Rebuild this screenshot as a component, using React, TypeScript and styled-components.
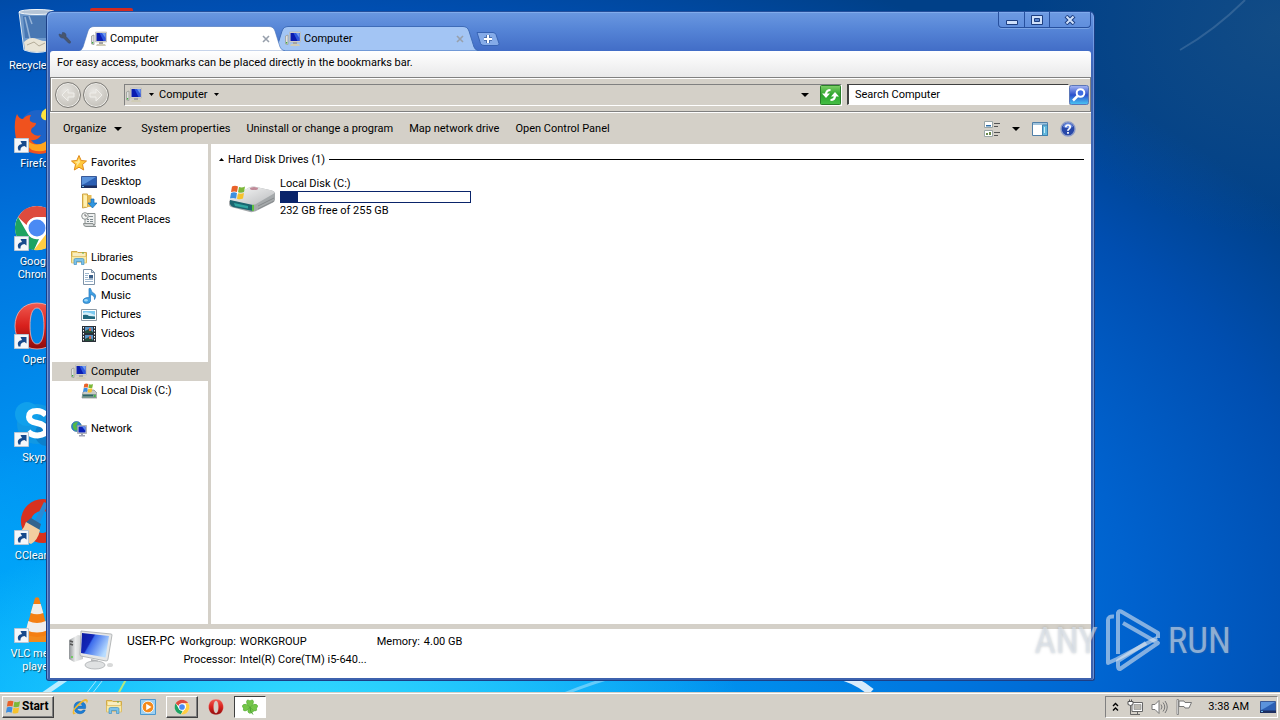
import React from 'react';
import styled, { createGlobalStyle, css } from 'styled-components';

const GlobalStyle = createGlobalStyle`
  *, *::before, *::after { box-sizing: border-box; }
  body { margin: 0; font-family: Roboto, "Liberation Sans", sans-serif; font-size: 11px; line-height: 13px; color: #000; }
  button, input { font: inherit; color: inherit; }
  button { padding: 0; border: 0; background: none; cursor: pointer; white-space: nowrap; }
  a { color: inherit; text-decoration: none; }
  ul, dl, dd, h1, h2 { margin: 0; padding: 0; list-style: none; font: inherit; }
  svg { display: block; flex: none; }
`;

const face = '#d4d0c8';
const sunken = css`border: 1px solid; border-color: #808080 #fff #fff #808080;`;
const raised = css`border: 1px solid; border-color: #fff #404040 #404040 #fff; box-shadow: inset -1px -1px #808080;`;

/* ---------- desktop ---------- */

const Screen = styled.div`
  display: flex;
  flex-direction: column;
  height: 100vh;
  overflow: hidden;
`;

const Desktop = styled.main`
  position: relative;
  flex: 1;
  min-height: 0;
  display: flex;
  overflow: hidden;
  background:
    radial-gradient(ellipse 34% 30% at 24% 104%, rgba(60, 225, 255, 0.9), transparent),
    radial-gradient(ellipse 20% 30% at 100% 4%, rgba(40, 90, 130, 0.45), transparent),
    linear-gradient(15deg, rgba(0, 180, 255, 0.75) 0%, transparent 24%),
    radial-gradient(ellipse 98% 104% at 20% 90%, #00a8fa 0%, #0094f2 28%, #0078e0 54%, #0062ce 70%, #004eb0 86%, #004088 100%);
`;

const Wallpaper = styled.svg`
  position: absolute;
  inset: 0;
  width: 100%;
  height: 100%;
`;

const IconColumn = styled.ul`
  position: relative;
  width: 74px;
  padding-top: 8px;
`;

const ShortcutItem = styled.li`
  height: 98px;
`;

const ShortcutLink = styled.a`
  position: relative;
  display: flex;
  flex-direction: column;
  align-items: center;
  gap: 3px;
  color: #fff;
  text-align: center;
  text-shadow: 1px 1px 1px rgba(0, 0, 0, 0.6);
`;

const ShortcutLabel = styled.span`
  width: 64px;
`;

const ArrowBadge = styled.svg`
  position: absolute;
  left: 14px;
  top: 32px;
`;

/* ---------- window ---------- */

const Window = styled.section`
  position: absolute;
  inset: 11px 185px 11px 46px;
  display: flex;
  flex-direction: column;
  padding: 0 3px 2px;
  border: 1px solid #1c3f86;
  border-top-color: #244f9c;
  border-radius: 6px 6px 3px 3px;
  background: linear-gradient(#6a98e0 0, #5584d6 18px, #416cc6 40px, #3f66b4 60px, #3d62ae 100%);
  box-shadow: inset 1px 1px rgba(150, 190, 245, 0.55), inset -1px 0 rgba(150, 190, 245, 0.5);
`;

const TitleBar = styled.header`
  display: flex;
  align-items: flex-end;
  height: 39px;
  padding-left: 7px;
`;

const WrenchButton = styled.button`
  align-self: center;
  width: 16px;
  margin: 12px 6px 0 0;
`;

const TabList = styled.div`
  display: flex;
  align-items: flex-end;
`;

const TabFrame = styled.div<{ $active?: boolean }>`
  position: relative;
  z-index: ${p => (p.$active ? 1 : 0)};
  width: 206px;
  height: 25px;
  margin-right: -12px;
`;

const TabShape = styled.svg`
  position: absolute;
  inset: 0;
`;

const TabContent = styled.div`
  position: relative;
  display: flex;
  align-items: center;
  height: 25px;
  padding: 0 15px 0 12px;
`;

const TabButton = styled.button`
  display: flex;
  align-items: center;
  gap: 3px;
  flex: 1;
`;

const NewTabButton = styled.button`
  margin: 0 0 5px 9px;
`;

const WindowControls = styled.div`
  display: flex;
  align-self: flex-start;
  margin-left: auto;
  height: 16px;
  border: 1px solid #27509e;
  border-top: 0;
  border-radius: 0 0 4px 4px;
  background: rgba(120, 165, 235, 0.25);
  box-shadow: 0 1px rgba(160, 195, 245, 0.5);
`;

const ControlButton = styled.button<{ $wide?: boolean }>`
  display: flex;
  align-items: center;
  justify-content: center;
  width: ${p => (p.$wide ? 41 : 25)}px;
  & + & { border-left: 1px solid #27509e; }
`;

const BookmarksBar = styled.p`
  position: relative;
  margin: 0;
  height: 26px;
  padding: 5px 7px;
  border-radius: 3px 3px 0 0;
  background: linear-gradient(#fff, #e9e9ea);
`;

const AddressRow = styled.div`
  display: flex;
  align-items: center;
  height: 35px;
  padding: 0 1px 0 4px;
  border: 1px solid #808080;
  box-shadow: inset 1px 1px #fff, 0 1px #fff;
  background: ${face};
`;

const NavButtons = styled.div`
  display: flex;
  gap: 2px;
  margin-right: 15px;
`;

const NavButton = styled.button`
  display: flex;
  align-items: center;
  justify-content: center;
  width: 26px;
  height: 26px;
  border: 1px solid #7c7a76;
  border-radius: 50%;
  background: radial-gradient(circle at 40% 35%, #e8e6e2, #c4c1ba 75%);
  box-shadow: inset 0 0 0 1px #efeeea;
`;

const AddressField = styled.div`
  ${sunken}
  flex: 1;
  display: flex;
  align-items: center;
  height: 22px;
`;

const Crumb = styled.button`
  display: flex;
  align-items: center;
  gap: 7px;
  padding-left: 1px;
  & + & { padding-left: 5px; }
`;

const FieldEnd = styled.div`
  display: flex;
  align-items: center;
  gap: 11px;
  margin-left: auto;
`;

const SearchForm = styled.form`
  display: flex;
  align-items: center;
  margin-left: 5px;
`;

const SearchInput = styled.input`
  width: 222px;
  height: 21px;
  padding: 0 6px;
  border: 1px solid;
  border-color: #404040 #fff #fff #404040;
  border-left-width: 2px;
  border-radius: 0;
  background: #fff;
  outline: 0;
  &::placeholder { color: #000; opacity: 1; }
`;

const Toolbar = styled.div`
  display: flex;
  align-items: center;
  gap: 16px;
  height: 31px;
  padding: 0 15px 0 13px;
  margin-top: 1px;
  background: ${face};
`;

const ToolButton = styled.button`
  display: flex;
  align-items: center;
  gap: 8px;
  &:first-child { margin-right: 3px; }
`;

const ToolIcons = styled.div`
  display: flex;
  align-items: center;
  gap: 12px;
  margin-left: auto;
`;

const Body = styled.div`
  flex: 1;
  display: flex;
  min-height: 0;
  background: #fff;
`;

const Sidebar = styled.nav`
  display: flex;
  flex-direction: column;
  gap: 19px;
  width: 161px;
  padding: 9px 0 0 2px;
  border-right: 3px solid ${face};
`;

const TreeItem = styled.a<{ $child?: boolean; $selected?: boolean }>`
  display: flex;
  align-items: center;
  gap: 4px;
  height: 19px;
  padding-left: ${p => (p.$child ? 29 : 19)}px;
  background: ${p => (p.$selected ? face : 'transparent')};
`;

const FileArea = styled.section`
  flex: 1;
  padding: 9px 7px 0 8px;
`;

const GroupHeader = styled.h2`
  display: flex;
  align-items: center;
  gap: 4px;
  &::after { content: ''; flex: 1; height: 1px; background: #000; }
`;

const DriveItem = styled.a`
  display: grid;
  grid-template-columns: 48px 191px;
  column-gap: 4px;
  align-items: center;
  width: max-content;
  margin: 11px 0 0 9px;
`;

const DriveText = styled.div`
  display: flex;
  flex-direction: column;
  gap: 1px;
`;

const CapacityBar = styled.div`
  height: 12px;
  border: 1px solid #0a246a;
`;

const CapacityFill = styled.div`
  height: 100%;
  background: #0a246a;
`;

const DetailsPane = styled.footer`
  display: flex;
  height: 54px;
  border-top: 5px solid ${face};
  padding: 0 19px;
  background: #fff;
`;

const ComputerName = styled.h1`
  margin: 5px 2px 0 14px;
  font-size: 12px;
  line-height: 14px;
`;

const Details = styled.dl`
  display: grid;
  grid-template-columns: 59px 130px 46px auto;
  grid-auto-rows: 18px;
  column-gap: 4px;
  align-items: center;
  align-content: start;
  padding-top: 3px;
  dt { text-align: right; white-space: nowrap; }
  dt:nth-of-type(3) { grid-column: 1; }
  dd { white-space: nowrap; }
`;

/* ---------- watermark ---------- */

const Watermark = styled.div`
  position: absolute;
  right: 49px;
  bottom: 18px;
  display: flex;
  align-items: center;
  gap: 7px;
  font-family: "Roboto Condensed", Roboto, sans-serif;
  font-size: 37px;
  line-height: 66px;
  color: rgba(225, 232, 240, 0.58);
  text-shadow: 0 0 3px rgba(110, 120, 130, 0.4);
`;

/* ---------- taskbar ---------- */

const Taskbar = styled.footer`
  display: flex;
  align-items: center;
  height: 28px;
  padding: 0 2px;
  border-top: 1px solid ${face};
  box-shadow: inset 0 1px #fff;
  background: ${face};
`;

const StartButton = styled.button`
  ${raised}
  display: flex;
  align-items: center;
  gap: 1px;
  width: 52px;
  height: 22px;
  padding-left: 2px;
  margin-right: 10px;
  font-size: 12px;
  font-weight: 700;
`;

const TaskButton = styled.button<{ $state?: 'open' | 'active' }>`
  display: flex;
  align-items: center;
  justify-content: center;
  width: 32px;
  height: 22px;
  margin-right: 2px;
  ${p => p.$state === 'open' && raised}
  ${p => p.$state === 'active' && css`
    background: #fff;
    border: 1px solid;
    border-color: #404040 #fff #fff #404040;
  `}
`;

const Tray = styled.div`
  ${sunken}
  display: flex;
  align-items: center;
  gap: 8px;
  height: 22px;
  margin-left: auto;
  padding: 0 1px 0 6px;
`;

const Clock = styled.time`
  margin: 0 3px 0 8px;
`;

/* ---------- icons ---------- */

const Caret = ({ size = 5 }: { size?: number }) => (
  <svg width={size} height={size > 5 ? 4 : 3} viewBox="0 0 10 6" preserveAspectRatio="none" aria-hidden><path d="M0 0h10L5 6z" /></svg>
);

const ComputerIcon = () => (
  <svg width="16" height="16" viewBox="0 0 16 16" aria-hidden>
    <path d="M.5 5l2.500-1v9.500l-2.500-.5z" fill="#dfe1df" stroke="#9a9d98" strokeWidth=".8" />
    <path d="M1 11h1.200v1.500H1z" fill="#3fae3f" />
    <path d="M4.500 1h11v10h-11z" fill="#dad9d2" stroke="#b3b3ae" strokeWidth=".6" />
    <path d="M5.500 2h9v8h-9z" fill="#0a1cb0" />
    <path d="M8.500 2l4 8h2V2z" fill="#2d55dc" />
    <path d="M11 2h3.500v5z" fill="#6f9cf0" />
    <path d="M8 11h4v2H8z" fill="#a4a4a6" />
    <path d="M6 13h8l1 2H5z" fill="#d0ccb6" />
  </svg>
);

const StarIcon = () => (
  <svg width="16" height="16" viewBox="0 0 16 16" aria-hidden>
    <path d="M8 .5l2.200 5 5.300.5-4 3.500 1.200 5.500L8 12.200 3.300 15l1.200-5.500L.5 6l5.300-.5z" fill="#ffc83c" stroke="#e08a1c" />
    <path d="M8 3.500L9.200 7l-4 4.800.8-3.300-2.500-1.700 3-.2z" fill="#ffe795" />
  </svg>
);

const DesktopIcon = () => (
  <svg width="16" height="16" viewBox="0 0 16 16" aria-hidden>
    <path d="M.5 2.500h15v10H.5z" fill="#2b5fb4" stroke="#3a5a98" />
    <path d="M1 3h14L5 9l-4 2z" fill="#5b93dc" />
    <path d="M0 11.500h16V14H0z" fill="#1d2f60" />
    <path d="M1 12h2v1H1z" fill="#6fc0f0" />
  </svg>
);

const DownloadsIcon = () => (
  <svg width="16" height="16" viewBox="0 0 16 16" aria-hidden>
    <path d="M1.500 1h5v13l-5 1z" fill="#f6dc85" stroke="#cfa545" />
    <path d="M6.500 2h4v12h-4z" fill="#e6bb55" />
    <path d="M3 2l3 1v11l-3-1z" fill="#fff0b0" />
    <path d="M10 6h3v4h3l-4.500 5L7 10h3z" fill="#2f96e0" stroke="#1769b0" strokeWidth=".7" />
  </svg>
);

const RecentIcon = () => (
  <svg width="16" height="16" viewBox="0 0 16 16" aria-hidden>
    <path d="M4 1.500h10v11H4z" fill="#eef0f0" stroke="#8b9190" />
    <path d="M2.500 11.500H12q0 3 3 3H5q-2.500 0-2.500-3z" fill="#d5d8d8" stroke="#8b9190" />
    <path d="M8 4.500h4M6 7.500h2M9 7.500h3M6 9.500h2M9 9.500h3" stroke="#7f8b90" />
    <circle cx="4" cy="4" r="3.300" fill="#f6f7f6" stroke="#8b9190" />
    <path d="M4 2v2h2" stroke="#555" fill="none" strokeWidth=".8" />
  </svg>
);

const FolderIcon = () => (
  <svg width="16" height="16" viewBox="0 0 16 16" aria-hidden>
    <path d="M.5 1.500H6l1 1h8.500V12H.5z" fill="#f2da82" stroke="#d1a94a" />
    <path d="M2 4h12M2 6h12" stroke="#fff" />
    <path d="M11 3h2" stroke="#5fae4a" />
    <path d="M.5 6.500h15V13h-3v-3h-9v3h-3z" fill="#f9e9a6" stroke="#d9b75c" strokeWidth=".7" />
    <path d="M3 14.500V10q0-1.500 1.500-1.500h7Q13 8.500 13 10v4.500h-2.500v-3h-5v3z" fill="#7cc2ea" stroke="#4392c4" strokeWidth=".7" />
  </svg>
);

const DocumentIcon = () => (
  <svg width="16" height="16" viewBox="0 0 16 16" aria-hidden>
    <path d="M2.500.5h8l3 3v12h-11z" fill="#fff" stroke="#7e93a8" />
    <path d="M10.500.5v3h3z" fill="#cfdbe6" stroke="#7e93a8" />
    <path d="M4 4.500h4M4 6.500h3M4 8.500h3M4 10.500h8M4 12.500h8" stroke="#9db7cf" />
    <path d="M8 6h4v3.500H8z" fill="#3b5f88" />
  </svg>
);

const MusicIcon = () => (
  <svg width="16" height="16" viewBox="0 0 16 16" aria-hidden>
    <path d="M8 .5h1.500q.5 3.500 3.500 5t.5 6q.5-4-4-5V13q-.5 2.500-4 2.500T2 13t3-3.200 3 .2z" fill="#3f9fe2" stroke="#2477bb" strokeWidth=".7" />
    <ellipse cx="5" cy="12.300" rx="1.800" ry="1.300" fill="#9fd7f8" />
  </svg>
);

const PictureIcon = () => (
  <svg width="16" height="16" viewBox="0 0 16 16" aria-hidden>
    <path d="M.5 2.500h15v11H.5z" fill="#fff" stroke="#8f9ba6" />
    <path d="M2 4h12v8H2z" fill="#7cc9f0" />
    <path d="M2 6q4-2 12 2v2H2z" fill="#d3eefa" />
    <path d="M2 8q4-1 6 1l6 .5V12H2z" fill="#20687e" />
  </svg>
);

const VideoIcon = () => (
  <svg width="16" height="16" viewBox="0 0 16 16" aria-hidden>
    <path d="M1 0h14v16H1z" fill="#2a3038" />
    <path d="M4 1h8v6H4zM4 9h8v6H4z" fill="#5b95c8" />
    <path d="M4 5l4-2 4 3v1H4zM4 13l4-2 4 3v1H4z" fill="#264f3c" />
    <path d="M8 2h2v3H8zM8 10h2v3H8z" fill="#d4684a" />
    <path d="M2.500 1v14M13.500 1v14" stroke="#fff" strokeDasharray="1.500 1.500" />
  </svg>
);

const Flag = () => (
  <>
    <path d="M1 1.500q3-1.500 6 0L6 7Q3.500 5.800 0 7z" fill="#e8622a" />
    <path d="M8 2q3 1 6-.5L13 7q-3 1.500-6 .3z" fill="#7cb83a" />
    <path d="M0 8q3-1.500 6 0l-1 5.500q-3-1.200-6 0z" fill="#3c8ee0" />
    <path d="M7 8.300q3 1 6-.3L12 13.500q-3 1.500-6 .3z" fill="#f6c22c" />
  </>
);

const SmallDriveIcon = () => (
  <svg width="16" height="16" viewBox="0 0 16 16" aria-hidden>
    <path d="M2 9l3-2h8l3 3v5H1z" fill="#c8cbc8" stroke="#85898a" strokeWidth=".7" />
    <path d="M1 11h14v4H1z" fill="#7d9a90" />
    <path d="M2 12.500h10" stroke="#2f6468" strokeWidth="1.500" />
    <path d="M13 12h1.500v2H13z" fill="#3fbf3f" />
    <svg x="2" y="0" width="10" height="10" viewBox="-1 0 15 15"><Flag /></svg>
  </svg>
);

const NetworkIcon = () => (
  <svg width="16" height="16" viewBox="0 0 16 16" aria-hidden>
    <circle cx="5.500" cy="5.500" r="5" fill="#2f86cc" stroke="#1b5d98" strokeWidth=".6" />
    <path d="M2 3q2-2.500 5-2L5 5l2 2-2 3Q1 8 2 3z" fill="#54b848" />
    <path d="M6.500 4.500h9v8h-9z" fill="#d8d9d6" stroke="#8e9296" strokeWidth=".6" />
    <path d="M7.500 5.500h7v6h-7z" fill="#0c22b8" />
    <path d="M11 5.500h3.500V10z" fill="#5d8cf0" />
    <path d="M10 12.500h2V14h2v1.500H8V14h2z" fill="#9fa2b4" />
  </svg>
);

const DriveIcon = () => (
  <svg width="48" height="32" viewBox="0 0 48 32" aria-hidden>
    <defs>
      <linearGradient id="driveTop" x1="0" y1="0" x2="1" y2="1"><stop offset="0" stopColor="#fbfbfb" /><stop offset="1" stopColor="#b9bbbd" /></linearGradient>
    </defs>
    <path d="M1 20L20 7q3-2 6-1.500l18 4q3 1 3 3v6q0 2-2 3L28 30q-3 1.500-6 1L3 26q-2-1-2-3z" fill="#a5a9ab" />
    <path d="M1 19L20 7q3-2 6-1.500l18 4q3 1 2 3L28 23q-3 1.500-6 1z" fill="url(#driveTop)" />
    <path d="M2 19l23 5v6L5 26q-2-1-3-3z" fill="#1b6570" />
    <path d="M6 22l14 3v2.500L7 25z" fill="#2fa5a0" />
    <path d="M24 24l2-.3v6l-2 .3z" fill="#5fc23f" />
    <path d="M30 25l16-8M30 28l16-8" stroke="#7d8284" strokeWidth=".8" />
    <ellipse cx="26" cy="7.500" rx="4" ry="1.500" fill="#c08a98" />
    <svg x="2" y="4" width="15" height="15" viewBox="-1 0 15 15"><Flag /></svg>
  </svg>
);

const BigComputerIcon = () => (
  <svg width="44" height="44" viewBox="0 0 44 44" aria-hidden>
    <defs>
      <linearGradient id="screenBlue" x1="0" y1="0" x2="1" y2=".5"><stop offset="0" stopColor="#0a1aa0" /><stop offset=".4" stopColor="#1226b8" /><stop offset=".45" stopColor="#3c6cec" /><stop offset="1" stopColor="#b8dcff" /></linearGradient>
      <linearGradient id="tower" x1="0" x2="1"><stop offset="0" stopColor="#8f9396" /><stop offset=".45" stopColor="#eceded" /><stop offset="1" stopColor="#c7c9ca" /></linearGradient>
    </defs>
    <path d="M0 11l9-5 5 1v23l-9 3-5-3z" fill="url(#tower)" />
    <path d="M1 12l3 1M1 15l3 1" stroke="#555" strokeWidth="1.500" />
    <circle cx="3" cy="28" r="1" fill="#5cd048" />
    <path d="M12 2l30 3q1 0 1 1l-4 24q0 2-2 2l-25-5q-1 0-1-2z" fill="#e6e7e7" stroke="#a6a9ab" strokeWidth=".8" />
    <path d="M13 4l27 3-3.500 21.500L12 24z" fill="url(#screenBlue)" />
    <path d="M22 30l7 1.500 1 4-8-1z" fill="#b5b7b9" />
    <ellipse cx="26" cy="36" rx="10" ry="4" fill="#dfe1e2" stroke="#aaadb0" strokeWidth=".8" />
    <ellipse cx="41" cy="36" rx="3" ry="2" fill="#d8d9d9" />
  </svg>
);

const WrenchIcon = () => (
  <svg width="16" height="16" viewBox="0 0 16 16" aria-hidden>
    <path d="M2 4l3 1 .5-2.500Q9.500 2.500 9 6.500l4.500 5q.5 2.500-2 1.500L6.500 8Q2.500 8.500 2 4z" fill="#48566e" stroke="#3c4a66" strokeWidth=".6" />
  </svg>
);

const CloseTabIcon = () => (
  <svg width="8" height="8" viewBox="0 0 8 8" aria-hidden><path d="M1 1l6 6M7 1L1 7" stroke="#98a0ac" strokeWidth="1.600" /></svg>
);

const NavArrow = ({ back }: { back?: boolean }) => (
  <svg width="16" height="16" viewBox="0 0 16 16" aria-hidden>
    <path d={back ? 'M8 2L2 8l6 6v-4h6V6H8z' : 'M8 2l6 6-6 6v-4H2V6h6z'} fill="#dedbd5" stroke="#efeeea" />
  </svg>
);

const RefreshIcon = () => (
  <svg width="21" height="20" viewBox="0 0 21 20" aria-hidden>
    <defs><linearGradient id="refreshBg" x2="0" y2="1"><stop offset="0" stopColor="#7fd068" /><stop offset=".5" stopColor="#2ca32c" /><stop offset="1" stopColor="#46c046" /></linearGradient></defs>
    <rect x=".5" y=".5" width="20" height="19" rx="1" fill="url(#refreshBg)" stroke="#2a7e2a" />
    <path d="M10.500 5Q6 5 6 9.500M10.500 15Q15 15 15 10.500" fill="none" stroke="#fff" strokeWidth="2.200" />
    <path d="M2 8.500h8L6 13zM11 11.500h8L15 7z" fill="#fff" />
  </svg>
);

const SearchIcon = () => (
  <svg width="20" height="20" viewBox="0 0 20 20" aria-hidden>
    <defs><linearGradient id="searchBg" x2="0" y2="1"><stop offset="0" stopColor="#a9b8f4" /><stop offset=".5" stopColor="#2a50cc" /><stop offset="1" stopColor="#4cc8f4" /></linearGradient></defs>
    <rect x=".5" y=".5" width="19" height="19" rx="2" fill="url(#searchBg)" stroke="#5a76b8" />
    <circle cx="11.500" cy="8" r="3.800" fill="#3e6ce0" stroke="#fff" strokeWidth="2" />
    <path d="M8.500 11L4 15.500" stroke="#fff" strokeWidth="2.500" />
  </svg>
);

const ViewIcon = () => (
  <svg width="16" height="16" viewBox="0 0 16 16" aria-hidden>
    <path d="M.5.500h8v6h-8zM.5 9.500h8v6h-8z" fill="#fff" stroke="#9aa6a6" />
    <path d="M2 4h5v1.500H2z" fill="#2f6fa8" />
    <path d="M2 12h2v2H2zM5 11h2v3H5z" fill="#6b8a4c" />
    <path d="M10 2.500h6M10 5.500h4M10 11.500h6M10 14.500h4" stroke="#555" />
  </svg>
);

const PaneIcon = () => (
  <svg width="16" height="14" viewBox="0 0 16 14" aria-hidden>
    <path d="M.5.500h15v13H.5z" fill="#fff" stroke="#4f7fa8" />
    <path d="M1 2h14" stroke="#9fc3dd" strokeWidth="2" />
    <path d="M10.500 3v10.500h5V3z" fill="#62b8dc" stroke="#3c7fae" />
    <path d="M12 5h1v6h-1z" fill="#c9ecf8" />
  </svg>
);

const HelpIcon = () => (
  <svg width="16" height="16" viewBox="0 0 16 16" aria-hidden>
    <circle cx="8" cy="8" r="7" fill="#2747a8" stroke="#8d9cc8" strokeWidth="1.400" />
    <path d="M3 6q1-4 5-4t5 4q-5 2-10 0z" fill="#6f8fe0" />
    <path d="M5.800 6.200Q5.800 4 8 4t2.200 2q0 1.300-1.200 1.900T8 9.800" fill="none" stroke="#fff" strokeWidth="1.700" />
    <path d="M7.100 11h1.800v1.700H7.100z" fill="#fff" />
  </svg>
);

const ChromeIcon = ({ size }: { size: number }) => (
  <svg width={size} height={size} viewBox="0 0 48 48" aria-hidden>
    <circle cx="24" cy="24" r="22" fill="#fff" />
    <path d="M24 2a22 22 0 0 1 19 11H24a11 11 0 0 0-10.500 8L5 13A22 22 0 0 1 24 2z" fill="#dd4b3e" />
    <path d="M5 13l9.500 16.500A11 11 0 0 0 26 35l-5 11A22 22 0 0 1 5 13z" fill="#1da362" />
    <path d="M43 13a22 22 0 0 1-22 33l12.500-16.500A11 11 0 0 0 32 13z" fill="#ffcd42" />
    <circle cx="24" cy="24" r="10.500" fill="#fff" />
    <circle cx="24" cy="24" r="8.500" fill="#4a8af4" />
  </svg>
);

const RecycleArt = () => (
  <svg width="48" height="48" viewBox="0 0 48 48" aria-hidden>
    <path d="M6 4h36l-5 38q-13 5-26 0z" fill="#9db8d4" fillOpacity=".7" stroke="#dbe7f2" />
    <path d="M10 8h28l-2 22H12z" fill="#2f60a4" fillOpacity=".6" />
    <path d="M12 9l6 26M16 8l3 8" stroke="#c8dcf0" strokeWidth="1.500" opacity=".6" />
    <path d="M11 34q6-6 13-3t13 2l-1 9q-12 4-24 0z" fill="#e9e4d6" />
    <path d="M14 37l7-3 5 4 6-3" stroke="#b3ab98" fill="none" />
    <ellipse cx="24" cy="4" rx="18" ry="2.500" fill="#b4c4d6" stroke="#f4f8fb" />
  </svg>
);

const FirefoxArt = () => (
  <svg width="48" height="48" viewBox="0 0 48 48" aria-hidden>
    <circle cx="25" cy="22" r="18" fill="#1d63c8" />
    <path d="M28 10q0-6 8-9 10 6 10 16-8-8-11-3-6 1-7-4z" fill="#ffe23c" />
    <path d="M4 8q2 5 6 5 3-4 8-4-2 3-1 6 2 2 6 2 0 3-4 5-2 3 0 5 4 4 9 2-3 6-10 5 4 6 12 4 9-3 9-12 2-4 0-9 8 6 7 13 0 17-20 18Q3 46 2 26 1 15 4 8z" fill="#f0521e" />
    <path d="M14 34q8 8 18 2 8-5 7-14 8 10 0 18t-20 4q-6-4-5-10z" fill="#ffa51e" />
  </svg>
);

const OperaArt = ({ size }: { size: number }) => (
  <svg width={size} height={size} viewBox="0 0 48 48" aria-hidden>
    <defs><linearGradient id={`opera${size}`} x2="0" y2="1"><stop offset="0" stopColor="#f05a50" /><stop offset=".5" stopColor="#d8201c" /><stop offset="1" stopColor="#8c0c0c" /></linearGradient></defs>
    <path fillRule="evenodd" d="M24 1C10 1 2 11 2 24s8 23 22 23 22-10 22-23S38 1 24 1zm0 5c5 0 7 8 7 18s-2 18-7 18-7-8-7-18 2-18 7-18z" fill={`url(#opera${size})`} stroke="#f5b4ae" strokeWidth=".8" />
  </svg>
);

const SkypeArt = () => (
  <svg width="48" height="48" viewBox="0 0 48 48" aria-hidden>
    <circle cx="24" cy="24" r="20" fill="#1098e4" />
    <circle cx="14" cy="14" r="12" fill="#10a0ec" />
    <circle cx="34" cy="34" r="12" fill="#0c80cc" />
    <path d="M33 15q-4-4-9-4-8 0-8 6 0 4.500 8 6t9 6.500-8.500 6q-6 0-9.500-4" fill="none" stroke="#fff" strokeWidth="6" />
  </svg>
);

const CCleanerArt = () => (
  <svg width="48" height="48" viewBox="0 0 48 48" aria-hidden>
    <path d="M46 8A22 22 0 1 0 46 38l-8-8a11 11 0 1 1 0-12z" fill="#d8321e" />
    <path d="M31 4l4 2-9 20-5-2z" fill="#2a8ad4" />
    <path d="M18 20l10 6-2 7-14-8z" fill="#33648e" />
    <path d="M13 24l14 8q-2 10-9 14L1 38q9-4 12-14z" fill="#f3cfa0" />
  </svg>
);

const VlcArt = () => (
  <svg width="48" height="48" viewBox="0 0 48 48" aria-hidden>
    <path d="M8 33h32l6 11q0 2-2 2H4q-2 0-2-2z" fill="#f28a1c" />
    <path d="M22 2q2-1.500 4 0l10 36q-12 6-24 0z" fill="#f47f12" />
    <path d="M20.300 8h7.400l2.600 9q-6.300 2.500-12.600 0zM15.300 25q8.700 4 17.400 0l2.300 9q-11 5-22 0z" fill="#efeeec" />
  </svg>
);

const PdfArt = () => (
  <svg width="48" height="48" viewBox="0 0 48 48" aria-hidden><rect x="3" width="43" height="46" rx="2" fill="#d42a20" /></svg>
);

const StartFlag = () => (
  <svg width="16" height="16" viewBox="-2 -1 17 17" aria-hidden><Flag /></svg>
);

const IeIcon = () => (
  <svg width="18" height="18" viewBox="0 0 18 18" aria-hidden>
    <path d="M14.500 10.500H6q.5 2.700 3.300 2.700 1.800 0 2.700-1.200h2.300Q13 15.800 9 15.800q-6-.5-6-6.300t6-6q6 .5 5.700 5.500zM6 8h5.500Q11 5.800 8.800 5.800T6 8z" fill="#1b7fd6" stroke="#0f5cae" strokeWidth=".5" />
    <path d="M2.500 16.500Q-.5 13 7 6t9.500-4q1 1.200-1 4 .5-2.800-1-2.900T8 7.500 3 13.500t2 1.800z" fill="#f0b82c" />
  </svg>
);

const MediaIcon = () => (
  <svg width="16" height="16" viewBox="0 0 16 16" aria-hidden>
    <path d="M.5.500h15v15H.5z" fill="#9fd0f0" stroke="#4a98d0" />
    <circle cx="8" cy="8" r="5.800" fill="#f48a1c" stroke="#fff" strokeWidth=".8" />
    <path d="M6.200 4.800v6.400L11.500 8z" fill="#fff" />
  </svg>
);

const CloverIcon = () => (
  <svg width="16" height="16" viewBox="0 0 16 16" aria-hidden>
    <g fill="#74c648" stroke="#4aa42e" strokeWidth=".5">
      <path d="M8 8Q4 5 4.500 2.500T8 1.800q3-1.800 3.500.7T8 8z" />
      <path d="M8 8Q4 4 1.500 5.500T1.500 9Q.5 12 3 12t5-4z" />
      <path d="M8 8q4-4 6.500-2.500T14.500 9q1 3-1.500 3T8 8z" />
      <path d="M8 8q-3 3-2 5t3 1 2.500-1.500T8 8z" />
    </g>
    <path d="M8 8q0 5 3 7.500" stroke="#4ba032" fill="none" />
  </svg>
);

const ChevronsIcon = () => (
  <svg width="7" height="10" viewBox="0 0 7 10" aria-hidden><path d="M1 4l2.500-2.500L6 4M1 8.500L3.500 6 6 8.500" fill="none" stroke="#000" strokeWidth="1.400" /></svg>
);

const TrayNetworkIcon = () => (
  <svg width="16" height="16" viewBox="0 0 16 16" aria-hidden>
    <path d="M5 3.500h10.500v9H5z" fill="#fff" stroke="#666" />
    <path d="M7 5.500h7v5H7z" fill="#bbb8b0" stroke="#888" strokeWidth=".6" />
    <path d="M3.500 6v9.500H13M10.500 12.500v3" fill="none" stroke="#666" />
    <path d="M1 2.500h5v3q-2.500 2-5 0zM2.500.500v2M4.500.500v2" fill="#fff" stroke="#555" />
  </svg>
);

const VolumeIcon = () => (
  <svg width="17" height="16" viewBox="0 0 17 16" aria-hidden>
    <path d="M1 5.500h3l4-4v13l-4-4H1z" fill="#fff" stroke="#777" />
    <path d="M10 5.500q2 2.500 0 5M12 3.500q3.500 4.500 0 9M14 2q4.500 6 0 12" fill="none" stroke="#777" />
  </svg>
);

const FlagIcon = () => (
  <svg width="16" height="16" viewBox="0 0 16 16" aria-hidden>
    <path d="M1 .5h1.500v15H1z" fill="#fff" stroke="#777" strokeWidth=".8" />
    <path d="M3 2h5l1 1.500h6.500L13 9H9L8 7.500H3z" fill="#fff" stroke="#777" />
  </svg>
);

const WatermarkLogo = () => (
  <svg width="56" height="64" viewBox="0 0 56 64" aria-hidden>
    <g fill="none" stroke="currentColor" strokeWidth="4" strokeLinejoin="round">
      <path d="M9 7.500Q3 7 3 11v43l9-4L52 29" />
      <path d="M13 45V4q1-3 4-1l36 21v5" />
      <path d="M18 14l35 20-38 26q-2 0-2-3v-5l28-18" />
    </g>
  </svg>
);

/* ---------- data ---------- */

const shortcuts: { name: string; art: React.ReactNode; linked?: boolean }[] = [
  { name: 'Recycle Bin', art: <RecycleArt /> },
  { name: 'Firefox', art: <FirefoxArt />, linked: true },
  { name: 'Google Chrome', art: <ChromeIcon size={48} />, linked: true },
  { name: 'Opera', art: <OperaArt size={48} />, linked: true },
  { name: 'Skype', art: <SkypeArt />, linked: true },
  { name: 'CCleaner', art: <CCleanerArt />, linked: true },
  { name: 'VLC media player', art: <VlcArt />, linked: true },
];

type Node = { name: string; icon: React.ReactNode; selected?: boolean };

const tree: { root: Node; children: Node[] }[] = [
  {
    root: { name: 'Favorites', icon: <StarIcon /> },
    children: [
      { name: 'Desktop', icon: <DesktopIcon /> },
      { name: 'Downloads', icon: <DownloadsIcon /> },
      { name: 'Recent Places', icon: <RecentIcon /> },
    ],
  },
  {
    root: { name: 'Libraries', icon: <FolderIcon /> },
    children: [
      { name: 'Documents', icon: <DocumentIcon /> },
      { name: 'Music', icon: <MusicIcon /> },
      { name: 'Pictures', icon: <PictureIcon /> },
      { name: 'Videos', icon: <VideoIcon /> },
    ],
  },
  {
    root: { name: 'Computer', icon: <ComputerIcon />, selected: true },
    children: [{ name: 'Local Disk (C:)', icon: <SmallDriveIcon /> }],
  },
  { root: { name: 'Network', icon: <NetworkIcon /> }, children: [] },
];

const drive = { name: 'Local Disk (C:)', free: 232, total: 255 };

/* ---------- parts ---------- */

function Tab({ title, active }: { title: string; active?: boolean }) {
  return (
    <TabFrame $active={active}>
      <TabShape width="206" height="25" viewBox="0 0 206 25" aria-hidden>
        <path
          d="M0 25q3-1 4-4l5-16q1.500-4.500 6-4.500h175q4.500 0 6 4.500l5 16q1 3 5 4z"
          fill={active ? '#fff' : '#a3c5f4'}
          stroke={active ? '#4570b8' : '#3f6cb8'}
          strokeWidth={active ? 0.6 : 1}
        />
      </TabShape>
      <TabContent>
        <TabButton role="tab" aria-selected={!!active}>
          <ComputerIcon />
          {title}
        </TabButton>
        <button aria-label={`Close ${title}`}><CloseTabIcon /></button>
      </TabContent>
    </TabFrame>
  );
}

function ExplorerWindow() {
  const used = ((drive.total - drive.free) / drive.total) * 100;
  return (
    <Window aria-label="Computer">
      <TitleBar>
        <WrenchButton aria-label="Settings"><WrenchIcon /></WrenchButton>
        <TabList role="tablist">
          <Tab title="Computer" active />
          <Tab title="Computer" />
        </TabList>
        <NewTabButton aria-label="New tab">
          <svg width="24" height="14" viewBox="0 0 24 14" aria-hidden>
            <path d="M1 .5h16q2 0 3 2l3 9q.5 2-2 2H8q-2.500 0-3.500-2z" fill="#85abe8" stroke="#3763b4" />
            <path d="M12 3v8M8 7h8" stroke="#4a6faf" strokeWidth="4" />
            <path d="M12 3v8M8 7h8" stroke="#fff" strokeWidth="2" />
          </svg>
        </NewTabButton>
        <WindowControls>
          <ControlButton aria-label="Minimize">
            <svg width="12" height="10" viewBox="0 0 12 10" aria-hidden><path d="M.5 5.500h11v4H.5z" fill="#cfe0fa" stroke="#1d3e80" /></svg>
          </ControlButton>
          <ControlButton aria-label="Maximize">
            <svg width="12" height="10" viewBox="0 0 12 10" aria-hidden><path d="M.5.500h11v9H.5z" fill="#cfe0fa" stroke="#1d3e80" /><path d="M3.500 3.500h5v3h-5z" fill="#5a84cc" stroke="#1d3e80" /></svg>
          </ControlButton>
          <ControlButton $wide aria-label="Close">
            <svg width="12" height="10" viewBox="0 0 12 10" aria-hidden><path d="M2 1l8 8M10 1L2 9" stroke="#1d3e80" strokeWidth="4" /><path d="M2.500 1.500l7 7M9.500 1.500l-7 7" stroke="#cfe0fa" strokeWidth="2" /></svg>
          </ControlButton>
        </WindowControls>
      </TitleBar>

      <BookmarksBar>For easy access, bookmarks can be placed directly in the bookmarks bar.</BookmarksBar>

      <AddressRow>
        <NavButtons>
          <NavButton aria-label="Back"><NavArrow back /></NavButton>
          <NavButton aria-label="Forward"><NavArrow /></NavButton>
        </NavButtons>
        <AddressField>
          <Crumb aria-label="Locations"><ComputerIcon /><Caret /></Crumb>
          <Crumb>Computer<Caret /></Crumb>
          <FieldEnd>
            <button aria-label="Previous locations"><Caret size={8} /></button>
            <button aria-label="Refresh"><RefreshIcon /></button>
          </FieldEnd>
        </AddressField>
        <SearchForm role="search">
          <SearchInput aria-label="Search Computer" placeholder="Search Computer" />
          <button type="button" aria-label="Search"><SearchIcon /></button>
        </SearchForm>
      </AddressRow>

      <Toolbar role="toolbar">
        <ToolButton>Organize <Caret size={8} /></ToolButton>
        <ToolButton>System properties</ToolButton>
        <ToolButton>Uninstall or change a program</ToolButton>
        <ToolButton>Map network drive</ToolButton>
        <ToolButton>Open Control Panel</ToolButton>
        <ToolIcons>
          <button aria-label="Change your view"><ViewIcon /></button>
          <button aria-label="More view options"><Caret size={8} /></button>
          <button aria-label="Show the preview pane"><PaneIcon /></button>
          <button aria-label="Help"><HelpIcon /></button>
        </ToolIcons>
      </Toolbar>

      <Body>
        <Sidebar aria-label="Folders">
          {tree.map(group => (
            <ul key={group.root.name}>
              <li>
                <TreeItem href="#" $selected={group.root.selected}>{group.root.icon}{group.root.name}</TreeItem>
              </li>
              {group.children.map(child => (
                <li key={child.name}><TreeItem href="#" $child>{child.icon}{child.name}</TreeItem></li>
              ))}
            </ul>
          ))}
        </Sidebar>
        <FileArea>
          <GroupHeader>
            <svg width="5" height="3" viewBox="0 0 5 3" aria-hidden><path d="M0 3h5L2.500 0z" /></svg>
            Hard Disk Drives (1)
          </GroupHeader>
          <DriveItem href="#">
            <DriveIcon />
            <DriveText>
              <span>{drive.name}</span>
              <CapacityBar role="meter" aria-label="Used space" aria-valuenow={Math.round(used)}>
                <CapacityFill style={{ width: `${used}%` }} />
              </CapacityBar>
              <span>{drive.free} GB free of {drive.total} GB</span>
            </DriveText>
          </DriveItem>
        </FileArea>
      </Body>

      <DetailsPane>
        <BigComputerIcon />
        <ComputerName>USER-PC</ComputerName>
        <Details>
          <dt>Workgroup:</dt><dd>WORKGROUP</dd>
          <dt>Memory:</dt><dd>4.00 GB</dd>
          <dt>Processor:</dt><dd>Intel(R) Core(TM) i5-640...</dd>
        </Details>
      </DetailsPane>
    </Window>
  );
}

export default function App() {
  return (
    <Screen>
      <GlobalStyle />
      <Desktop>
        <Wallpaper viewBox="0 0 1280 692" preserveAspectRatio="none" aria-hidden>
          <g fill="none" stroke="#fff">
            <path d="M44 694l26-18" strokeWidth="5" opacity=".7" />
            <path d="M86 694l14-18M92 694l14-18" strokeWidth="1" opacity=".6" />
            <path d="M118 694l10-18" stroke="#d8f060" strokeWidth="2" opacity=".8" />
            <path d="M564 694q30-12 50-17" strokeWidth="3" opacity=".35" />
            <path d="M835 674q22 6 36 18" strokeWidth="8" opacity=".85" />
            <path d="M1180 50Q1215 30 1245 0" strokeWidth="2" opacity=".14" />
          </g>
        </Wallpaper>
        <IconColumn>
          {shortcuts.map(item => (
            <ShortcutItem key={item.name}>
              <ShortcutLink href="#">
                {item.art}
                {item.linked && (
                  <ArrowBadge width="15" height="15" viewBox="0 0 15 15" aria-hidden>
                    <path d="M.5.500h14v14H.5z" fill="#f4f7fa" stroke="#b9c6d4" />
                    <path d="M4.500 12.500Q2 7 8 6L6.500 3 12.500 3v6.500L10.500 8Q6 8.500 6.500 12.500z" fill="#174a8c" />
                  </ArrowBadge>
                )}
                <ShortcutLabel>{item.name}</ShortcutLabel>
              </ShortcutLink>
            </ShortcutItem>
          ))}
        </IconColumn>
        <IconColumn>
          <ShortcutItem><ShortcutLink href="#" aria-label="Documents"><PdfArt /></ShortcutLink></ShortcutItem>
        </IconColumn>
        <ExplorerWindow />
        <Watermark><span>ANY</span><WatermarkLogo /><span>RUN</span></Watermark>
      </Desktop>

      <Taskbar>
        <StartButton><StartFlag />Start</StartButton>
        <TaskButton aria-label="Internet Explorer"><IeIcon /></TaskButton>
        <TaskButton aria-label="Windows Explorer"><FolderIcon /></TaskButton>
        <TaskButton aria-label="Media Player"><MediaIcon /></TaskButton>
        <TaskButton aria-label="Chrome" $state="open"><ChromeIcon size={16} /></TaskButton>
        <TaskButton aria-label="Opera"><OperaArt size={16} /></TaskButton>
        <TaskButton aria-label="Clover" $state="active"><CloverIcon /></TaskButton>
        <Tray>
          <button aria-label="Show hidden icons"><ChevronsIcon /></button>
          <button aria-label="Network"><TrayNetworkIcon /></button>
          <button aria-label="Volume"><VolumeIcon /></button>
          <button aria-label="Action center"><FlagIcon /></button>
          <Clock>3:38 AM</Clock>
          <button aria-label="Show desktop"><DesktopIcon /></button>
        </Tray>
      </Taskbar>
    </Screen>
  );
}
